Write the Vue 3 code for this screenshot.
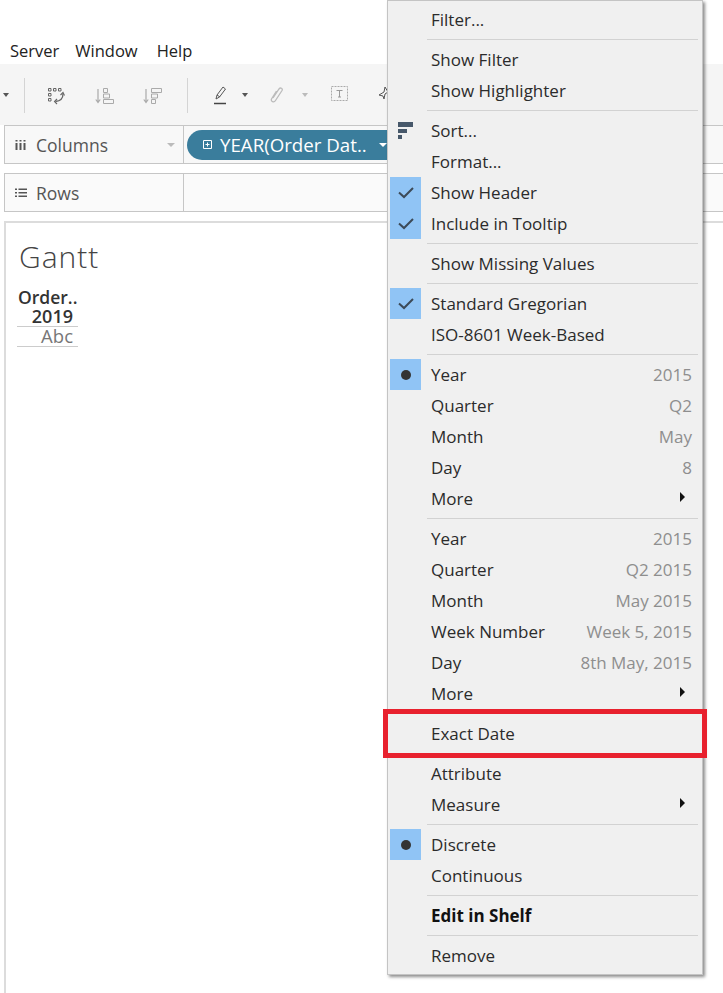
<script setup>
const menuBar = ["Server", "Window", "Help"];

// every section of the context menu, a separator goes between them
const sections = [
  [{ label: "Filter..." }],
  [{ label: "Show Filter" }, { label: "Show Highlighter" }],
  [
    { label: "Sort...", mark: "sort" },
    { label: "Format..." },
    { label: "Show Header", mark: "check" },
    { label: "Include in Tooltip", mark: "check" },
  ],
  [{ label: "Show Missing Values" }],
  [{ label: "Standard Gregorian", mark: "check" }, { label: "ISO-8601 Week-Based" }],
  [
    { label: "Year", value: "2015", mark: "dot" },
    { label: "Quarter", value: "Q2" },
    { label: "Month", value: "May" },
    { label: "Day", value: "8" },
    { label: "More", sub: true },
  ],
  [
    { label: "Year", value: "2015" },
    { label: "Quarter", value: "Q2 2015" },
    { label: "Month", value: "May 2015" },
    { label: "Week Number", value: "Week 5, 2015" },
    { label: "Day", value: "8th May, 2015" },
    { label: "More", sub: true },
  ],
  [{ label: "Exact Date", boxed: true }],
  [{ label: "Attribute" }, { label: "Measure", sub: true }],
  [{ label: "Discrete", mark: "dot" }, { label: "Continuous" }],
  [{ label: "Edit in Shelf", bold: true }],
  [{ label: "Remove" }],
];
</script>

<template>
  <div class="page">
    <nav class="menubar">
      <span v-for="name in menuBar" :key="name">{{ name }}</span>
    </nav>

    <div class="toolbar">
      <span class="caret dark first"></span>
      <span class="tool-sep sep-a"></span>
      <svg class="tool swap" width="18" height="18" viewBox="0 0 18 18" fill="none" stroke="#666" stroke-width="1">
        <path d="M1.5 1.5h2.5v2.5h-2.5zM6.5 1.5h2.5v2.5h-2.5zM11.5 1.5h2.5v2.5h-2.5zM1.5 6.5h2.5v2.5h-2.5zM1.5 11.5h2.5v2.5h-2.5z" />
        <path d="M16 7c0 4-2.500 7-7.500 7.500" stroke-width="1.300" />
        <path d="M13.500 8l2.500-2.500 1.500 3M10 12l-2.500 2.500 2.500 2.500" stroke-width="1.100" />
      </svg>
      <svg class="tool sort-a" width="19" height="18" viewBox="0 0 19 18" fill="none" stroke="#aaa" stroke-width="1">
        <path d="M3 2v13M.8 12.500l2.200 3 2.200-3" stroke-width="1.200" />
        <path d="M8.500 1.500h4v4h-4zM8.500 7h6v4h-6zM8.500 12.500h10v4h-10z" />
      </svg>
      <svg class="tool sort-b" width="19" height="18" viewBox="0 0 19 18" fill="none" stroke="#aaa" stroke-width="1">
        <path d="M3 2v13M.8 12.500l2.200 3 2.200-3" stroke-width="1.200" />
        <path d="M8.500 1.500h10v4h-10zM8.500 7h6v4h-6zM8.500 12.500h4v4h-4z" />
      </svg>
      <span class="tool-sep sep-b"></span>
      <svg class="tool pen" width="13" height="19" viewBox="0 0 13 19" fill="none" stroke="#555" stroke-width="1">
        <path d="M2 13l1-4 6-8 2.500 2-6 8z" />
        <path d="M3 9l3 2" />
        <path d="M0 17.500h12" stroke="#444" stroke-width="1.500" />
      </svg>
      <span class="caret dark pen-caret"></span>
      <svg class="tool clip" width="14" height="18" viewBox="0 0 14 18" fill="none" stroke="#bbb" stroke-width="1.300">
        <path d="M3 12l6-9c1.500-2 4-.5 3 1.500l-6.500 10c-1.500 2.500-5 1-4-1.500l5-8" />
      </svg>
      <span class="caret light clip-caret"></span>
      <svg class="tool text-box" width="18" height="16" viewBox="0 0 18 16" fill="none">
        <rect x=".5" y=".5" width="16" height="14" stroke="#aaa" stroke-dasharray="2 1" />
        <path d="M5.500 4.500h6M8.500 4.500v6.500M7 11h3" stroke="#999" />
      </svg>
      <svg class="tool pin" width="12" height="18" viewBox="0 0 12 18" fill="none" stroke="#555" stroke-width="1">
        <path d="M7 1l-1 5-5 3 4 1 1 3 1-5 3-2z" />
      </svg>
    </div>

    <section class="shelf columns">
      <div class="shelf-name">
        <svg width="12" height="10" viewBox="0 0 12 10" fill="#555">
          <path d="M.5 3h2v7h-2zM.5 0h2v1.500h-2zM4.500 3h2v7h-2zM4.500 0h2v1.500h-2zM8.500 3h2v7h-2zM8.500 0h2v1.500h-2z" />
        </svg>
        <span>Columns</span>
        <span class="caret light shelf-caret"></span>
      </div>
      <div class="shelf-body">
        <div class="pill">
          <svg width="10" height="10" viewBox="0 0 10 10" fill="none" stroke="#fff" stroke-width="1">
            <path d="M.5.500h8v8h-8zM2.500 4.500h4M4.500 2.500v4" />
          </svg>
          <span>YEAR(Order Dat..</span>
          <span class="caret white"></span>
        </div>
      </div>
    </section>

    <section class="shelf rows">
      <div class="shelf-name">
        <svg width="12" height="10" viewBox="0 0 12 10" fill="#555">
          <path d="M0 .5h2v1.500h-2zM3.500 .5h8.500v1.500h-8.500zM0 4h2v1.500h-2zM3.500 4h8.500v1.500h-8.500zM0 7.500h2v1.500h-2zM3.500 7.500h8.500v1.500h-8.500z" />
        </svg>
        <span>Rows</span>
      </div>
      <div class="shelf-body"></div>
    </section>

    <main class="view">
      <h1>Gantt</h1>
      <div class="crosstab">
        <div class="field">Order..</div>
        <div class="year">2019</div>
        <div class="cell">Abc</div>
      </div>
    </main>

    <div class="context-menu">
      <template v-for="(section, i) in sections" :key="i">
        <div v-if="i > 0" class="menu-sep"></div>
        <div
          v-for="item in section"
          :key="item.label"
          class="menu-row"
          :class="{ bold: item.bold, boxed: item.boxed }"
        >
          <span class="mark" :class="{ on: item.mark && item.mark !== 'sort' }">
            <svg v-if="item.mark === 'check'" width="16" height="12" viewBox="0 0 16 12" fill="none" stroke="#3c4a58" stroke-width="2">
              <path d="M1 5.500l5 4.500 9-9" />
            </svg>
            <span v-else-if="item.mark === 'dot'" class="dot"></span>
            <span v-else-if="item.mark === 'sort'" class="sort-icon"><i></i><i></i><i></i></span>
          </span>
          <span class="label">{{ item.label }}</span>
          <span v-if="item.value" class="value">{{ item.value }}</span>
          <span v-if="item.sub" class="arrow"></span>
        </div>
      </template>
    </div>
  </div>
</template>

<style>
html,
body {
  margin: 0;
  background: #fff;
}
</style>

<style scoped>
.page {
  position: relative;
  width: 723px;
  height: 993px;
  overflow: hidden;
  background: #fff;
  color: #333;
  font-family: "Open Sans", "Liberation Sans", sans-serif;
}

.menubar {
  display: flex;
  gap: 16px;
  height: 64px;
  box-sizing: border-box;
  padding: 40px 0 0 10px;
  font-size: 16.500px;
  line-height: 22px;
  color: #222;
  background: #fff;
}
.menubar span:last-child {
  margin-left: 3px;
}

.toolbar {
  position: relative;
  height: 61px;
  background: #f5f5f5;
}
.tool {
  position: absolute;
}
.tool-sep {
  position: absolute;
  top: 14px;
  width: 1px;
  height: 35px;
  background: #d4d4d4;
}
.sep-a { left: 24px; }
.sep-b { left: 187px; }
.swap { left: 47px; top: 23px; }
.sort-a { left: 95px; top: 23px; }
.sort-b { left: 143px; top: 23px; }
.pen { left: 214px; top: 22px; }
.clip { left: 270px; top: 22px; }
.text-box { left: 331px; top: 22px; }
.pin { left: 378px; top: 22px; }

.caret {
  display: inline-block;
  width: 0;
  height: 0;
  border-left: 4px solid transparent;
  border-right: 4px solid transparent;
  border-top: 4px solid #444;
}
.caret.dark { border-top-color: #555; }
.caret.light { border-top-color: #bbb; }
.caret.white { border-top-color: #fff; }
.toolbar .caret {
  position: absolute;
  top: 29px;
  border-left-width: 3px;
  border-right-width: 3px;
}
.first { left: 3px; }
.pen-caret { left: 242px; }
.clip-caret { left: 302px; }

.shelf {
  display: flex;
  box-sizing: border-box;
  margin-left: 4px;
  background: #fafafa;
  border: 1px solid #c6c6c6;
  border-right: 0;
}
.columns {
  height: 39px;
  background: #f8f8f8;
}
.rows {
  height: 39px;
  margin-top: 9px;
}
.shelf-name {
  display: flex;
  align-items: center;
  box-sizing: border-box;
  width: 179px;
  padding-left: 10px;
  font-size: 17.500px;
  color: #555;
  border-right: 1px solid #c6c6c6;
}
.shelf-name svg {
  margin-right: 9px;
}
.shelf-caret {
  margin-left: auto;
  margin-right: 8px;
}
.shelf-body {
  flex: 1;
  padding: 4px 0 0 3px;
}

.pill {
  display: flex;
  align-items: center;
  gap: 7px;
  width: 300px;
  height: 30px;
  box-sizing: border-box;
  padding: 0 0 1px 16px;
  border-radius: 15px;
  background: #3a7d9c;
  color: #fff;
  font-size: 18.700px;
  white-space: nowrap;
}
.pill .caret {
  margin-left: 5px;
}

.view {
  margin: 9px 0 0 4px;
  height: 780px;
  box-sizing: border-box;
  padding: 16px 0 0 13px;
  border-top: 2px solid #dcdcdc;
  border-left: 2px solid #dcdcdc;
}
.view h1 {
  margin: 0;
  font-family: "Open Sans", sans-serif;
  font-size: 30px;
  font-weight: 300;
  line-height: 36px;
  letter-spacing: 1px;
  color: #444;
}
.crosstab {
  width: 61px;
  margin-top: 12px;
  margin-left: -2px;
  color: #333;
}
.field {
  height: 20px;
  line-height: 20px;
  padding-left: 1px;
  font-size: 17.500px;
  font-weight: 600;
  white-space: nowrap;
}
.year {
  height: 19px;
  line-height: 19px;
  padding-right: 5px;
  text-align: right;
  font-size: 18px;
  font-weight: 600;
  border-bottom: 1px solid #ccc;
}
.cell {
  height: 19px;
  line-height: 18px;
  padding-right: 5px;
  text-align: right;
  font-size: 18.500px;
  color: #777;
  border-bottom: 1px solid #ccc;
}

/* the open context menu lies over the whole page */
.context-menu {
  position: absolute;
  top: 0;
  left: 387px;
  width: 316px;
  height: 975px;
  box-sizing: border-box;
  padding-top: 3px;
  background: #f0f0f0;
  border: 1px solid #c4c4c4;
  box-shadow: 2px 2px 3px rgba(0, 0, 0, 0.45);
  font-size: 17px;
  color: #2b2b2b;
}
.menu-row {
  position: relative;
  display: flex;
  align-items: center;
  height: 31px;
  padding-right: 10px;
}
.menu-row.bold {
  font-weight: 700;
  color: #111;
}
.menu-row.boxed::after {
  content: "";
  position: absolute;
  top: -9px;
  left: -5px;
  box-sizing: border-box;
  width: 324px;
  height: 49px;
  border: 5px solid #e8212e;
}
.menu-sep {
  box-sizing: border-box;
  height: 9px;
  margin: 0 4px 0 39px;
  padding-top: 4px;
}
.menu-sep::before {
  content: "";
  display: block;
  height: 1px;
  background: #d2d2d2;
}
.mark {
  display: flex;
  align-items: center;
  justify-content: center;
  box-sizing: border-box;
  flex: none;
  width: 31px;
  height: 31px;
  margin: 0 10px 0 2px;
}
.mark.on {
  background: #90c4f5;
}
.dot {
  width: 10px;
  height: 10px;
  border-radius: 50%;
  background: #333;
}
.sort-icon {
  display: flex;
  flex-direction: column;
  gap: 2px;
  width: 15px;
}
.sort-icon i {
  display: block;
  height: 4px;
  background: #47586a;
}
.sort-icon i:nth-child(1) { width: 15px; height: 5px; }
.sort-icon i:nth-child(2) { width: 9px; }
.sort-icon i:nth-child(3) { width: 4px; }
.value {
  margin-left: auto;
  color: #8e8e8e;
}
.arrow {
  margin-left: auto;
  margin-right: 7px;
  margin-top: -3px;
  border-top: 5px solid transparent;
  border-bottom: 5px solid transparent;
  border-left: 5px solid #111;
}
</style>
